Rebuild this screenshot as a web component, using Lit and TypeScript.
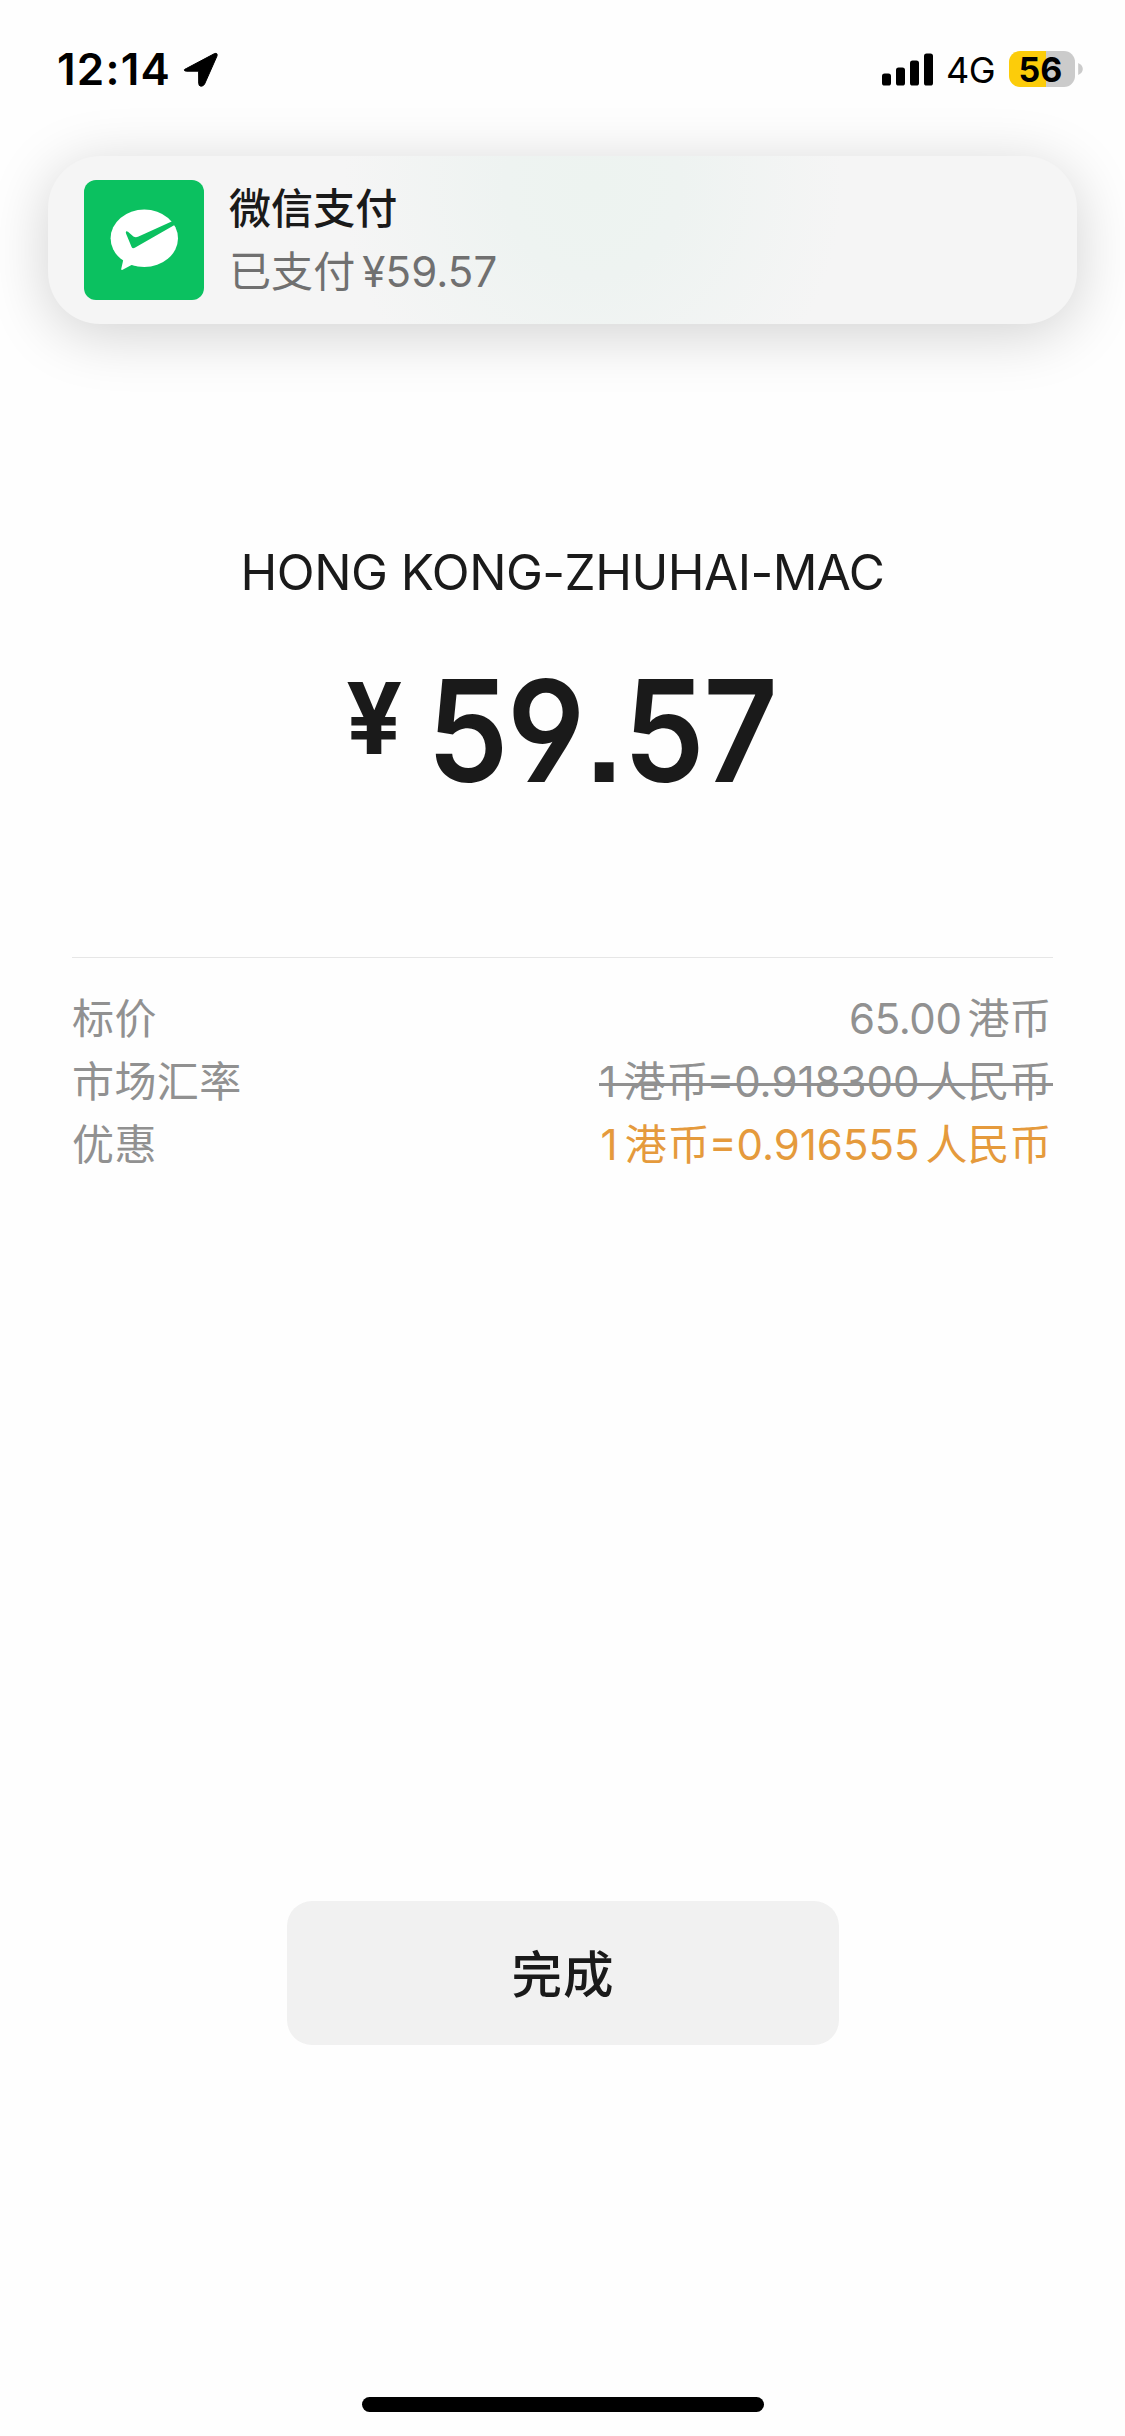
import { LitElement, html, css } from "lit";
import { customElement, property } from "lit/decorators.js";

@customElement("status-bar")
export class StatusBar extends LitElement {
  @property() time = "";
  @property() network = "";
  @property({ type: Number }) battery = 0;

  static styles = css`
    :host {
      display: flex;
      align-items: center;
      justify-content: space-between;
      height: 138px;
      padding: 0 42px 0 57px;
      box-sizing: border-box;
      color: #000;
    }
    .group { display: flex; align-items: center; }
    .time { font-size: 44px; font-weight: 600; line-height: 54px; letter-spacing: 1.2px; }
    .arrow { display: block; margin-left: 12px; }
    .signal { display: block; }
    .network { font-size: 36px; font-weight: 430; line-height: 44px; margin: 1px 0 0 13px; letter-spacing: -0.5px; }
    .battery {
      width: 66px;
      height: 36px;
      margin-left: 14px;
      border-radius: 11px;
      text-align: center;
      font-size: 34px;
      font-weight: 700;
      line-height: 37px;
      letter-spacing: 0;
      text-indent: -3px;
    }
    .nub { display: block; margin-left: 3px; }
  `;

  render() {
    return html`
      <div class="group">
        <span class="time">${this.time}</span>
        <svg class="arrow" width="36" height="36" viewBox="0 0 36 36">
          <path
            d="M3.2 17.6 L31.5 2.6 Q34.8 1.6 34 5 L21.6 33 Q20.4 35.3 18 35.2 Q15.7 35 15.7 32.4 L15.6 20.2 L3.6 20.2 Q1.2 20 1.2 18.9 Q1.4 18.4 3.2 17.6 Z"
            fill="#000" stroke="#000" stroke-width="1" stroke-linejoin="round" />
        </svg>
      </div>
      <div class="group">
        <svg class="signal" width="51" height="33" viewBox="0 0 51 33">
          <rect x="0" y="20.5" width="9" height="12" rx="2.6" />
          <rect x="14" y="14.5" width="9" height="18" rx="2.6" />
          <rect x="28" y="7.5" width="9" height="25" rx="2.6" />
          <rect x="42" y="0.5" width="9" height="32" rx="2.6" />
        </svg>
        <span class="network">${this.network}</span>
        <div
          class="battery"
          style="background: linear-gradient(90deg, #fccc0a ${this.battery}%, #cbcbcb ${this.battery}%)"
        >${this.battery}</div>
        <svg class="nub" width="5" height="12" viewBox="0 0 5 12">
          <path d="M0.2 0 Q4.8 2.2 4.8 6 Q4.8 9.8 0.2 12 Z" fill="#cbcbcb" />
        </svg>
      </div>
    `;
  }
}

@customElement("pay-banner")
export class PayBanner extends LitElement {
  static styles = css`
    :host {
      display: flex;
      align-items: center;
      height: 168px;
      box-sizing: border-box;
      padding-left: 36px;
      border-radius: 52px;
      background:
        radial-gradient(ellipse 250px 260px at 545px 30px, #edf3f0 0%, #eef3f1 35%, rgba(245, 245, 245, 0) 100%),
        #f5f5f5;
      box-shadow: 0 10px 60px rgba(0, 0, 0, 0.18);
    }
    .logo { display: block; flex: none; }
    .copy { margin-left: 25px; font-size: 42px; line-height: 63px; letter-spacing: 0.1px; white-space: nowrap; }
    .title { font-weight: 500; color: #1a1a1a; }
    .text { color: #707070; }
    .sum { margin-left: 7px; letter-spacing: 0.1px; }
  `;

  render() {
    return html`
      <svg class="logo" width="120" height="120" viewBox="0 0 120 120">
        <rect width="120" height="120" rx="12" fill="#0bc160" />
        <ellipse cx="60.3" cy="58.3" rx="33.7" ry="28.7" fill="#fff" />
        <path d="M38.5 75 Q40 79 38.8 82 L37.2 89 Q37.2 90.6 38.6 89.8 L47.5 85 L54 86 Z" fill="#fff" />
        <path
          d="M41.8 52.2 Q42 50.6 44 51.8 L49.4 56.4 Q51.4 57.8 54 56.8 L88.2 41.2 L91.4 44.6 L50.8 67.8 Q48.6 69 47.6 67 L42 53.6 Z"
          fill="#0bc160" />
      </svg>
      <div class="copy">
        <div class="title">微信支付</div>
        <div class="text">已支付<span class="sum">¥59.57</span></div>
      </div>
    `;
  }
}

@customElement("app-root")
export class AppRoot extends LitElement {
  static styles = css`
    :host {
      display: flex;
      flex-direction: column;
      width: 1125px;
      height: 2436px;
      box-sizing: border-box;
      overflow: hidden;
      background: #fefefe;
      font-family: Inter, "Noto Sans CJK SC", sans-serif;
      font-weight: 400;
    }
    pay-banner { margin: 18px 48px 0; }
    .merchant {
      margin-top: 218px;
      text-align: center;
      font-size: 49.5px;
      line-height: 60px;
      letter-spacing: -0.52px;
      color: #1a1a1a;
      white-space: nowrap;
    }
    .amount {
      display: flex;
      align-items: flex-start;
      margin: 62px 0 0 346px;
      height: 150px;
      color: #1a1a1a;
      font-feature-settings: "cv04", "ss07";
    }
    .currency { width: 81px; font-size: 99px; font-weight: 650; line-height: 108px; }
    .value {
      font-size: 141px;
      font-weight: 575;
      line-height: 134px;
      letter-spacing: -1.8px;
      font-kerning: none;
      transform: scaleX(0.92);
      transform-origin: left;
      white-space: nowrap;
    }
    .details {
      margin: 143px 72px 0;
      padding-top: 29px;
      border-top: 1px solid #e6e6e6;
      font-size: 42px;
      line-height: 63px;
      color: #919191;
    }
    .row { display: flex; justify-content: space-between; white-space: nowrap; }
    .label { letter-spacing: 0.4px; }
    .price { display: flex; padding-right: 1.5px; }
    .price .num { margin-right: 6px; letter-spacing: -0.4px; }
    .rate { display: flex; padding-right: 1.5px; }
    .one { margin-right: 7px; }
    .rate .unit { letter-spacing: 1px; }
    .num { margin-right: 6px; }
    .rate .num { margin-left: -3px; }
    .rate.old { position: relative; }
    .rate.old::after {
      content: "";
      position: absolute;
      left: 0;
      right: 0;
      top: 33px;
      height: 3px;
      background: #919191;
    }
    .rate.new { color: #e59a3c; }
    .rate.new .num { letter-spacing: 0; margin-left: -2px; }
    .done {
      display: block;
      width: 552px;
      height: 144px;
      margin: 725px 0 0 287px;
      padding: 0;
      border: 0;
      border-radius: 25px;
      background: #f1f1f1;
      color: #1a1a1a;
      font: 500 50.5px/147px Inter, "Noto Sans CJK SC", sans-serif;
      letter-spacing: 1px;
      text-align: center;
    }
    .home { width: 402px; height: 15px; margin: 352px 0 0 362px; border-radius: 8px; background: #000; }
  `;

  private rate(kind: string, value: string) {
    return html`<span class="rate ${kind}"
      ><span class="one">1</span><span class="unit">港币</span><span class="num">=${value}</span><span>人民币</span></span
    >`;
  }

  render() {
    return html`
      <status-bar time="12:14" network="4G" battery="56"></status-bar>
      <pay-banner></pay-banner>
      <div class="merchant">HONG KONG-ZHUHAI-MAC</div>
      <div class="amount"><span class="currency">¥</span><span class="value">59.57</span></div>
      <div class="details">
        <div class="row">
          <span class="label">标价</span>
          <span class="price"><span class="num">65.00</span><span>港币</span></span>
        </div>
        <div class="row"><span class="label">市场汇率</span>${this.rate("old", "0.918300")}</div>
        <div class="row"><span class="label">优惠</span>${this.rate("new", "0.916555")}</div>
      </div>
      <button class="done">完成</button>
      <div class="home"></div>
    `;
  }
}
